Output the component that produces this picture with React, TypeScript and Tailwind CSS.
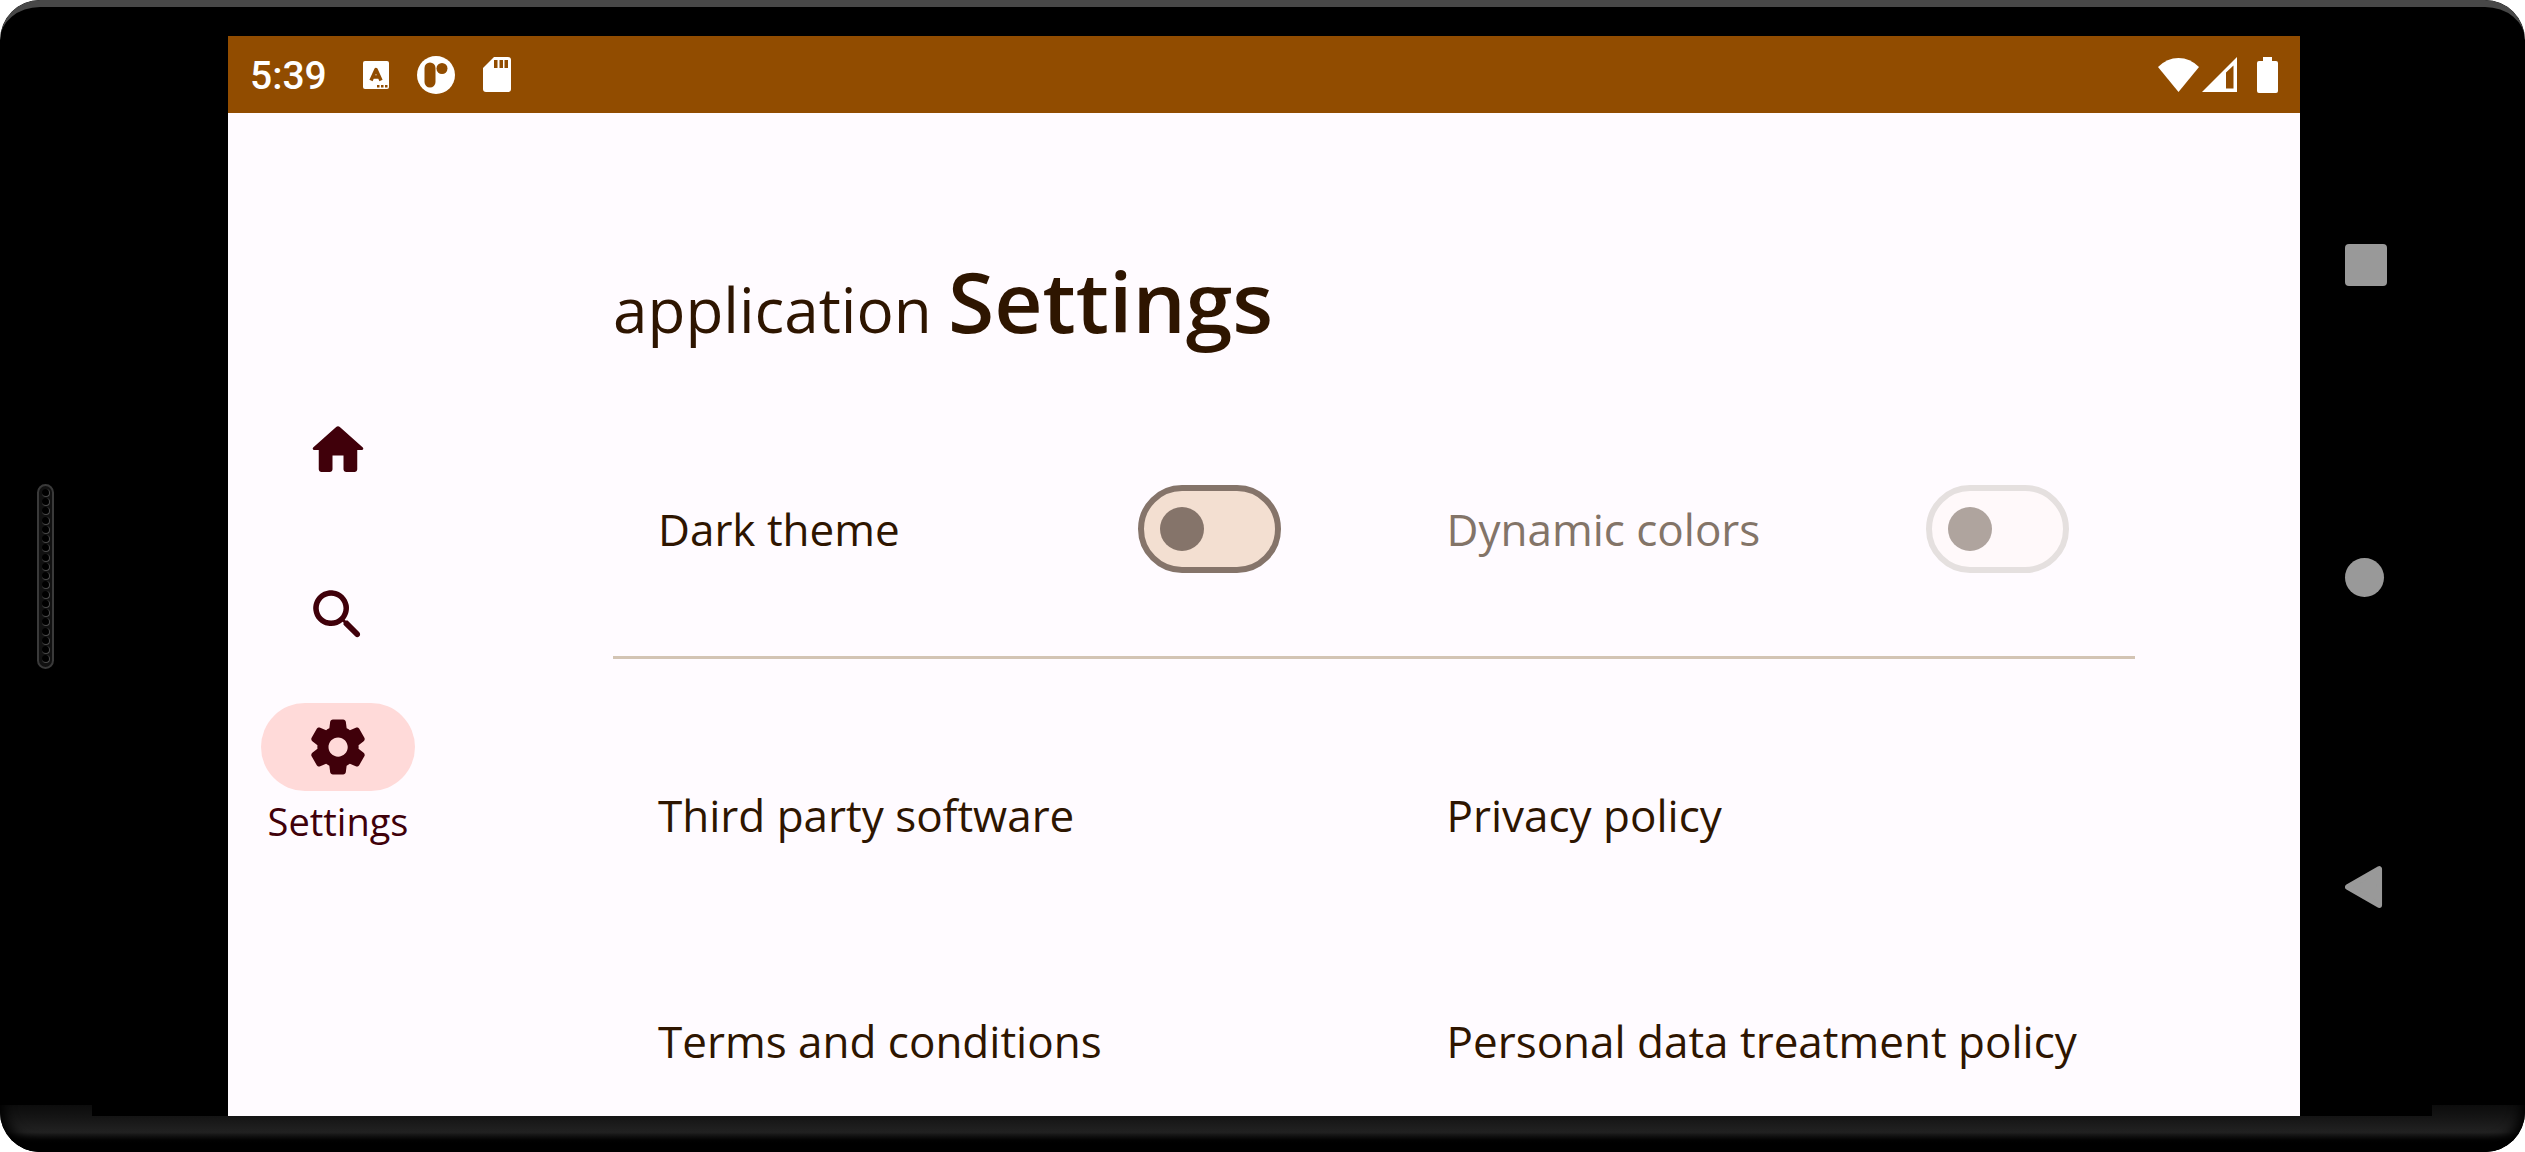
import type { ReactNode } from "react";

const HOME =
  "M10 19v-5h4v5c0 .55.45 1 1 1h3c.55 0 1-.45 1-1v-7h1.7c.46 0 .68-.57.33-.87L12.67 3.6c-.38-.34-.96-.34-1.34 0l-8.36 7.53c-.34.3-.13.87.33.87H5v7c0 .55.45 1 1 1h3c.55 0 1-.45 1-1z";
const SEARCH =
  "M15.5 14h-.79l-.28-.27c1.2-1.4 1.82-3.31 1.48-5.34-.47-2.78-2.79-5-5.59-5.34-4.23-.52-7.79 3.04-7.27 7.27.34 2.8 2.56 5.12 5.34 5.59 2.03.34 3.94-.28 5.34-1.48l.27.28v.79l4.25 4.25c.41.41 1.08.41 1.49 0 .41-.41.41-1.08 0-1.49L15.5 14zm-6 0C7.01 14 5 11.99 5 9.5S7.01 5 9.5 5 14 7.01 14 9.5 11.99 14 9.5 14z";
const GEAR =
  "M19.5 12c0-.23-.01-.45-.03-.68l1.86-1.41c.4-.3.51-.86.26-1.3l-1.87-3.23c-.25-.44-.79-.62-1.25-.42l-2.15.91c-.37-.26-.76-.49-1.17-.68l-.29-2.31C14.8 2.38 14.37 2 13.87 2h-3.73C9.63 2 9.2 2.38 9.14 2.88l-.29 2.31c-.41.19-.8.42-1.17.68l-2.15-.91c-.46-.2-1-.02-1.25.42L2.41 8.62c-.25.44-.14.99.26 1.3l1.86 1.41C4.51 11.55 4.5 11.77 4.5 12s.01.45.03.68l-1.86 1.41c-.4.3-.51.86-.26 1.3l1.87 3.23c.25.44.79.62 1.25.42l2.15-.91c.37.26.76.49 1.17.68l.29 2.31c.06.5.49.88.99.88h3.73c.5 0 .93-.38.99-.88l.29-2.31c.41-.19.8-.42 1.17-.68l2.15.91c.46.2 1 .02 1.25-.42l1.87-3.23c.25-.44.14-.99-.26-1.3l-1.86-1.41C19.49 12.45 19.5 12.23 19.5 12zM12.04 15.5c-1.93 0-3.5-1.57-3.5-3.5s1.57-3.5 3.5-3.5 3.5 1.57 3.5 3.5-1.57 3.5-3.5 3.5z";

function Glyph({ d }: { d: string }) {
  return (
    <svg viewBox="0 0 24 24" className="size-[66px] fill-current" aria-hidden="true">
      <path d={d} />
    </svg>
  );
}

function StatusBar() {
  return (
    <header className="flex h-[77px] shrink-0 items-center justify-between bg-[#914c00] px-[22px] text-white">
      <div className="flex items-center">
        <span className="pt-1 font-[Roboto,sans-serif] text-[39px] leading-none font-medium">5:39</span>
        <svg viewBox="0 0 26 28" className="ml-9 h-7 w-[26px]" aria-hidden="true">
          <rect width="26" height="28" rx="2" fill="#fff" />
          <path d="M8 19.500 L13 8.500 L18 19.500 M9.500 16 H16.500" fill="none" stroke="#914c00" strokeWidth="3.500" strokeLinejoin="round" />
          <path d="M14 24h2.500v2.500H14zM18 24h2.500v2.500H18zM22 24h2.500v2.500H22z" fill="#914c00" />
        </svg>
        <svg viewBox="0 0 38 38" className="ml-7 size-[38px]" aria-hidden="true">
          <circle cx="19" cy="19" r="19" fill="#fff" />
          <rect x="7.500" y="6.500" width="11" height="25" rx="5.500" fill="#914c00" />
          <circle cx="25" cy="12.500" r="5.500" fill="#914c00" />
        </svg>
        <svg viewBox="0 0 28 35" className="ml-7 h-[35px] w-7" aria-hidden="true">
          <path d="M11 0H25Q28 0 28 3V32Q28 35 25 35H3Q0 35 0 32V11Z" fill="#fff" />
          <path d="M11 3h3.500v8H11zM16.500 3H20v8h-3.500zM21.500 3H25v8h-3.500z" fill="#914c00" />
        </svg>
      </div>
      <div className="flex items-center">
        <svg viewBox="0 0 41 34" className="h-[34px] w-[41px]" aria-hidden="true">
          <path d="M20.500 34 L0 9 Q9 0 20.500 0 T41 9Z" fill="#fff" />
        </svg>
        <svg viewBox="0 0 35 35" className="ml-[3px] size-[35px]" aria-hidden="true">
          <path fillRule="evenodd" d="M35 0V35H0ZM24 15.500V31.500H31.500V8.500Z" fill="#fff" />
        </svg>
        <svg viewBox="0 0 21 36" className="ml-5 h-9 w-[21px]" aria-hidden="true">
          <path d="M6 0h9v4h4q2 0 2 2V34q0 2-2 2H2q-2 0-2-2V6q0-2 2-2h4z" fill="#fff" />
        </svg>
      </div>
    </header>
  );
}

function RailItem({ label, icon, selected = false }: { label: string; icon: string; selected?: boolean }) {
  return (
    <button
      type="button"
      aria-label={label}
      aria-current={selected ? "page" : undefined}
      className={
        selected
          ? "flex h-[165px] w-full flex-col items-center pt-1.5"
          : "flex h-[165px] w-full items-center justify-center"
      }
    >
      {selected ? (
        <>
          <span className="flex h-[88px] w-[154px] items-center justify-center rounded-full bg-[#ffdad9]">
            <Glyph d={icon} />
          </span>
          <span className="mt-1 text-[38px] leading-[52px]">{label}</span>
        </>
      ) : (
        <Glyph d={icon} />
      )}
    </button>
  );
}

function ToggleRow({ id, label, disabled = false }: { id: string; label: string; disabled?: boolean }) {
  return (
    <div className="flex h-36 items-center justify-between pr-[66px] pl-[45px]">
      <label htmlFor={id} className={disabled ? "text-[#837468]" : ""}>
        {label}
      </label>
      <input
        id={id}
        type="checkbox"
        role="switch"
        disabled={disabled}
        className="flex h-[88px] w-[143px] shrink-0 appearance-none items-center rounded-full border-6 border-[#85746a] bg-[#f3dfd1] px-4 before:size-11 before:rounded-full before:bg-[#85746a] checked:justify-end disabled:border-[#e5e0df] disabled:bg-[#fff9fa] disabled:before:bg-[#afa49e]"
      />
    </div>
  );
}

function LinkRow({ children }: { children: ReactNode }) {
  return (
    <a href="#" className="flex h-36 items-center pl-[45px] whitespace-nowrap">
      {children}
    </a>
  );
}

function Speaker() {
  return (
    <div className="flex h-[185px] w-[17px] flex-col items-center justify-evenly rounded-full border-2 border-[#3a3a3a] bg-[#111] py-0.5">
      {Array.from({ length: 19 }, (_, i) => (
        <span key={i} className="size-2 rounded-full border-r border-b border-[#4a4a4a] bg-black" />
      ))}
    </div>
  );
}

function NavButtons() {
  return (
    <nav aria-label="System" className="flex w-[225px] shrink-0 flex-col pt-[207px] pl-[45px] text-[#999]">
      <button type="button" aria-label="Overview" className="flex size-11 items-center">
        <span className="size-[42px] rounded-sm bg-current" />
      </button>
      <button type="button" aria-label="Home" className="mt-[268px] flex size-11 items-center">
        <span className="size-[39px] rounded-full bg-current" />
      </button>
      <button type="button" aria-label="Back" className="mt-[266px] flex size-11 items-center">
        <svg viewBox="0 0 40 46" className="h-11 w-[38px] fill-current stroke-current" aria-hidden="true">
          <path d="M3 23 L36 4V42Z" strokeWidth="6" strokeLinejoin="round" />
        </svg>
      </button>
    </nav>
  );
}

export default function App() {
  return (
    <div className="min-h-screen bg-white">
      <div className="relative flex min-h-screen flex-col overflow-hidden rounded-[40px] bg-black">
        <div className="absolute inset-x-0 top-0 h-12 rounded-t-[40px] border-t-7 border-[#484848]" />
        <div className="h-9 shrink-0" />

        <div className="flex grow">
          <div className="flex w-[228px] shrink-0 items-center pl-[37px]">
            <Speaker />
          </div>

          <div className="flex min-w-0 grow flex-col bg-[#fffbff] font-['Open_Sans','Noto_Sans',sans-serif]">
            <StatusBar />
            <div className="flex grow">
              <nav aria-label="Main" className="flex w-[220px] shrink-0 flex-col justify-center text-[#40000a]">
                <RailItem label="Home" icon={HOME} />
                <RailItem label="Search" icon={SEARCH} />
                <RailItem label="Settings" icon={GEAR} selected />
              </nav>

              <main className="min-w-0 grow px-[165px] pt-32 text-[44px] leading-[60px] text-[#2e1500]">
                <h1 className="text-[62px] leading-[120px] whitespace-nowrap">
                  application <span className="text-[84px] font-semibold">Settings</span>
                </h1>
                <div className="mt-[88px] grid grid-cols-2 gap-x-[55px]">
                  <ToggleRow id="dark-theme" label="Dark theme" />
                  <ToggleRow id="dynamic-colors" label="Dynamic colors" disabled />
                </div>
                <hr className="mt-[55px] border-t-3 border-[#d3c4b4]" />
                <div className="mt-[84px] grid grid-cols-2 gap-x-[55px] gap-y-[82px]">
                  <LinkRow>Third party software</LinkRow>
                  <LinkRow>Privacy policy</LinkRow>
                  <LinkRow>Terms and conditions</LinkRow>
                  <LinkRow>Personal data treatment policy</LinkRow>
                </div>
              </main>
            </div>
          </div>

          <NavButtons />
        </div>

        <div className="relative h-9 shrink-0 bg-linear-to-b from-[#141414] via-[#222] via-45% to-black to-85%">
          <div className="absolute -top-[11px] left-0 h-[11px] w-[92px] bg-linear-to-b from-[#0c0c0c] to-[#141414]" />
          <div className="absolute -top-[11px] right-0 h-[11px] w-[93px] bg-linear-to-b from-[#0c0c0c] to-[#141414]" />
          <div className="absolute inset-x-0 -top-9 bottom-0 rounded-b-[40px] shadow-[inset_0_-4px_12px_4px_#000] [clip-path:inset(25px_0_0_0)]" />
        </div>
      </div>
    </div>
  );
}
